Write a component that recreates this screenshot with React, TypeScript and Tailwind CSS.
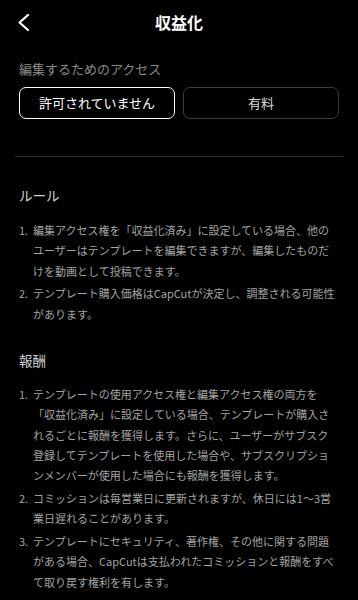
import React from "react";

const font = { fontFamily: '"Noto Sans CJK JP", "Noto Sans", sans-serif' };

type Item = string[];

function List({ items }: { items: Item[] }) {
  return (
    <div className="flex flex-col gap-[2.5px] text-[11px] leading-[20.3px] text-[#a3a3a3]">
      {items.map((lines, i) => (
        <div key={i} className="flex">
          <div className="w-[14px] shrink-0">{i + 1}.</div>
          <div className="flex flex-col">
            {lines.map((l, j) => (
              <span key={j} className="whitespace-nowrap">
                {l}
              </span>
            ))}
          </div>
        </div>
      ))}
    </div>
  );
}

export default function App() {
  const rules: Item[] = [
    [
      "編集アクセス権を「収益化済み」に設定している場合、他の",
      "ユーザーはテンプレートを編集できますが、編集したものだ",
      "けを動画として投稿できます。",
    ],
    ["テンプレート購入価格はCapCutが決定し、調整される可能性", "があります。"],
  ];
  const rewards: Item[] = [
    [
      "テンプレートの使用アクセス権と編集アクセス権の両方を",
      "「収益化済み」に設定している場合、テンプレートが購入さ",
      "れるごとに報酬を獲得します。さらに、ユーザーがサブスク",
      "登録してテンプレートを使用した場合や、サブスクリプショ",
      "ンメンバーが使用した場合にも報酬を獲得します。",
    ],
    ["コミッションは毎営業日に更新されますが、休日には1～3営", "業日遅れることがあります。"],
    [
      "テンプレートにセキュリティ、著作権、その他に関する問題",
      "がある場合、CapCutは支払われたコミッションと報酬をすべ",
      "て取り戻す権利を有します。",
    ],
  ];

  return (
    <div className="w-[358px] h-[600px] overflow-hidden bg-black text-white" style={font}>
      <div className="relative flex h-[44px] items-center justify-center">
        <svg
          className="absolute left-[16px] top-[12px]"
          width="16"
          height="21"
          viewBox="0 0 16 21"
          fill="none"
        >
          <polyline
            points="12,3 3.5,10.5 12,18"
            stroke="white"
            strokeWidth="2.2"
            strokeLinecap="round"
            strokeLinejoin="round"
          />
        </svg>
        <span className="text-[16px] font-bold leading-none">収益化</span>
      </div>

      <div className="px-[19px]">
        <div className="mt-[16px] text-[13px] leading-[18px] text-[#8a8a8a]">編集するためのアクセス</div>
        <div className="mt-[9px] flex gap-[8px]">
          <div className="flex h-[32px] flex-1 items-center justify-center rounded-[7px] border-[1.5px] border-white text-[13px] text-white">
            許可されていません
          </div>
          <div className="flex h-[32px] flex-1 items-center justify-center rounded-[7px] border border-[#3c3c3c] text-[13px] text-[#d8d8d8]">
            有料
          </div>
        </div>
      </div>

      <div className="mx-[15px] mt-[37px] h-px bg-[#2c2c2c]" />

      <div className="px-[19px]">
        <div className="mt-[28px] text-[13.5px] leading-[20px] text-[#d0d0d0]">ルール</div>
        <div className="mt-[15px]">
          <List items={rules} />
        </div>
        <div className="mt-[26px] text-[13.5px] leading-[20px] text-[#d0d0d0]">報酬</div>
        <div className="mt-[14px]">
          <List items={rewards} />
        </div>
      </div>
    </div>
  );
}
